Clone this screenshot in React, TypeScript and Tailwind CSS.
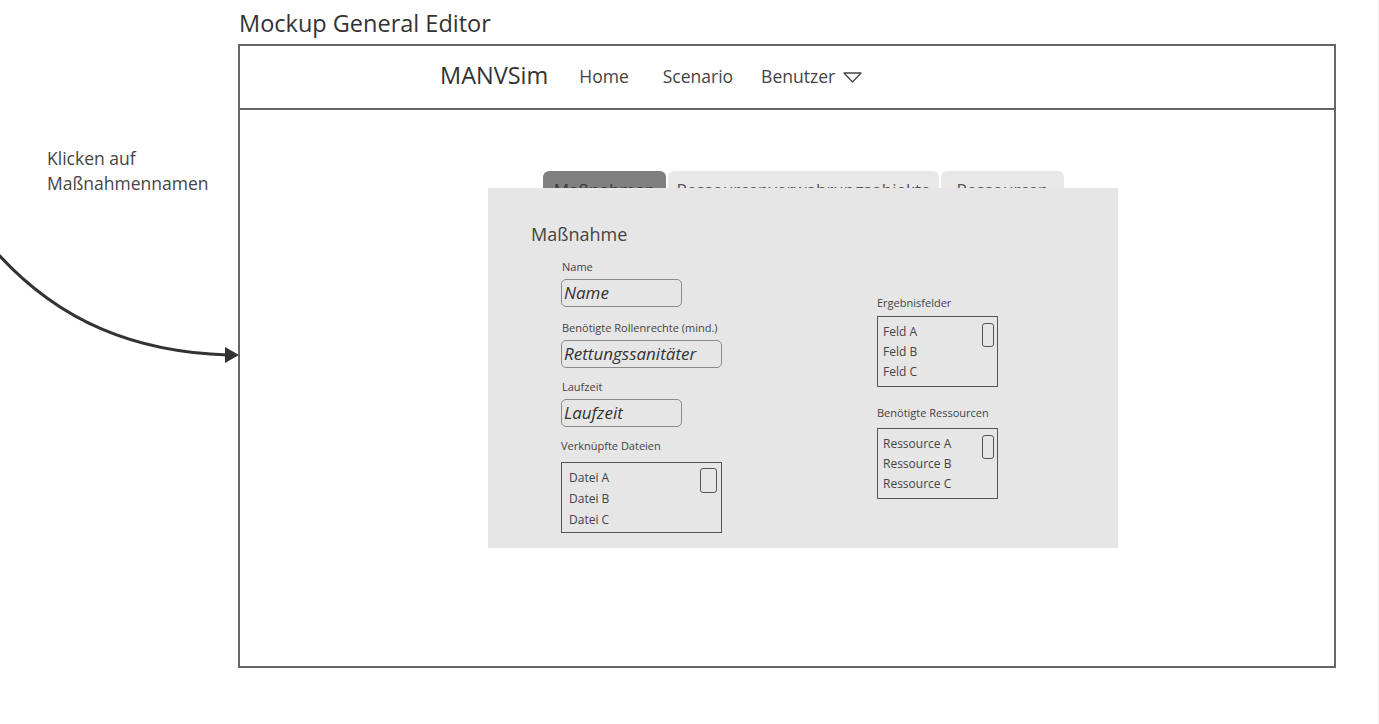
import React from 'react';

const tabs = [
  { label: 'Maßnahmen', width: 'w-[123px]', active: true },
  { label: 'Ressourcenverwahrungsobjekte', width: 'w-[271px]', active: false },
  { label: 'Ressourcen', width: 'w-[123px]', active: false },
];

function Field({ label, value, wide, className }: { label: string; value: string; wide?: boolean; className?: string }) {
  return (
    <div className={className}>
      <div className="text-[11px] leading-[16px] text-[#444] pl-[1px]">{label}</div>
      <div
        className={
          'mt-[4px] h-[28px] rounded-[5px] border border-[#8a8a8a] flex items-center pl-[2px] text-[17px] italic text-[#333] ' +
          (wide ? 'w-[161px]' : 'w-[121px]')
        }
      >
        {value}
      </div>
    </div>
  );
}

function ListBox({
  items,
  wide,
  spacing,
  className,
}: {
  items: string[];
  wide?: boolean;
  spacing: 'loose' | 'tight';
  className?: string;
}) {
  return (
    <div
      className={
        'h-[71px] border-[1.5px] border-[#555] flex justify-between ' +
        (wide ? 'w-[161px] pl-[7px] pr-[4px] pt-[4px]' : 'w-[121px] pl-[5px] pr-[3px] pt-[5px]') +
        (className ? ' ' + className : '')
      }
    >
      <div className={'text-[12px] text-[#444] ' + (spacing === 'loose' ? 'leading-[21px]' : 'leading-[20px]')}>
        {items.map((it) => (
          <div key={it}>{it}</div>
        ))}
      </div>
      <div
        className={
          'shrink-0 rounded-[3px] border-[1.5px] border-[#555] ' +
          (wide ? 'w-[17px] h-[25px] mt-[1px]' : 'w-[12px] h-[24px] mt-[1px]')
        }
      />
    </div>
  );
}

export default function App() {
  return (
    <div className="relative w-[1379px] h-[724px] bg-white border-r border-[#f1f1f1] font-['Open_Sans',sans-serif] text-[#333] overflow-hidden">
      <div className="flex">
        <div className="w-[238px] shrink-0 pl-[47px] pt-[146px] text-[17.5px] leading-[25px] text-[#444]">
          <div>Klicken auf</div>
          <div>Maßnahmennamen</div>
        </div>

        <div className="pt-[8px]">
          <div className="text-[23.5px] leading-[30px] pl-[1px] text-[#333]">Mockup General Editor</div>

          <div className="mt-[6px] w-[1098px] h-[624px] border-2 border-[#666]">
            <div className="h-[64px] border-b-2 border-[#666] flex items-center pl-[200px] pb-[2px]">
              <span className="text-[23.5px] text-[#333]">MANVSim</span>
              <span className="ml-[31px] text-[17.5px] text-[#444]">Home</span>
              <span className="ml-[34px] text-[17.5px] text-[#444]">Scenario</span>
              <span className="ml-[28px] text-[17.5px] text-[#444]">Benutzer</span>
              <svg className="ml-[8px] mt-[2px]" width="19" height="11" viewBox="0 0 19 11">
                <path d="M1 1 L18 1 L9.5 10 Z" fill="none" stroke="#444" strokeWidth="1.3" strokeLinejoin="round" />
              </svg>
            </div>

            <div className="ml-[248px] mt-[61px]">
              {/* tab captions are partly hidden behind the panel, as in the mockup */}
              <div className="flex gap-[2px] ml-[55px] h-[17px] overflow-hidden">
                {tabs.map((t) => (
                  <div
                    key={t.label}
                    className={
                      t.width +
                      ' h-[30px] rounded-t-[6px] text-center whitespace-nowrap text-[17px] leading-[22px] pt-[8px] ' +
                      (t.active ? 'bg-[#808080] text-[#3a3a3a]' : 'bg-[#e8e8e8] text-[#555]')
                    }
                  >
                    {t.label}
                  </div>
                ))}
              </div>

              <div className="w-[630px] h-[360px] bg-[#e6e6e6] pl-[43px] pt-[34px]">
                <div className="text-[18px] leading-[24px] text-[#444]">Maßnahme</div>

                <div className="flex ml-[30px] mt-[13px]">
                  <div className="w-[316px] shrink-0">
                    <Field label="Name" value="Name" />
                    <Field className="mt-[13px]" label="Benötigte Rollenrechte (mind.)" value="Rettungssanitäter" wide />
                    <Field className="mt-[11px]" label="Laufzeit" value="Laufzeit" />
                    <div className="mt-[11px]">
                      <div className="text-[11px] leading-[16px] text-[#444]">Verknüpfte Dateien</div>
                      <ListBox className="mt-[8px]" items={['Datei A', 'Datei B', 'Datei C']} wide spacing="loose" />
                    </div>
                  </div>

                  <div className="pt-[36px]">
                    <div className="text-[11px] leading-[16px] text-[#444]">Ergebnisfelder</div>
                    <ListBox className="mt-[5px]" items={['Feld A', 'Feld B', 'Feld C']} spacing="tight" />
                    <div className="mt-[18px] text-[11px] leading-[16px] text-[#444]">Benötigte Ressourcen</div>
                    <ListBox className="mt-[7px]" items={['Ressource A', 'Ressource B', 'Ressource C']} spacing="tight" />
                  </div>
                </div>
              </div>
            </div>
          </div>
        </div>
      </div>

      <svg className="absolute left-0 top-0 pointer-events-none" width="242" height="400" viewBox="0 0 242 400">
        <path d="M -2 254 C 60 322, 135 352, 228 355" fill="none" stroke="#333" strokeWidth="3" />
        <path d="M 225 347 L 239 355 L 225 363 Z" fill="#333" />
      </svg>
    </div>
  );
}
